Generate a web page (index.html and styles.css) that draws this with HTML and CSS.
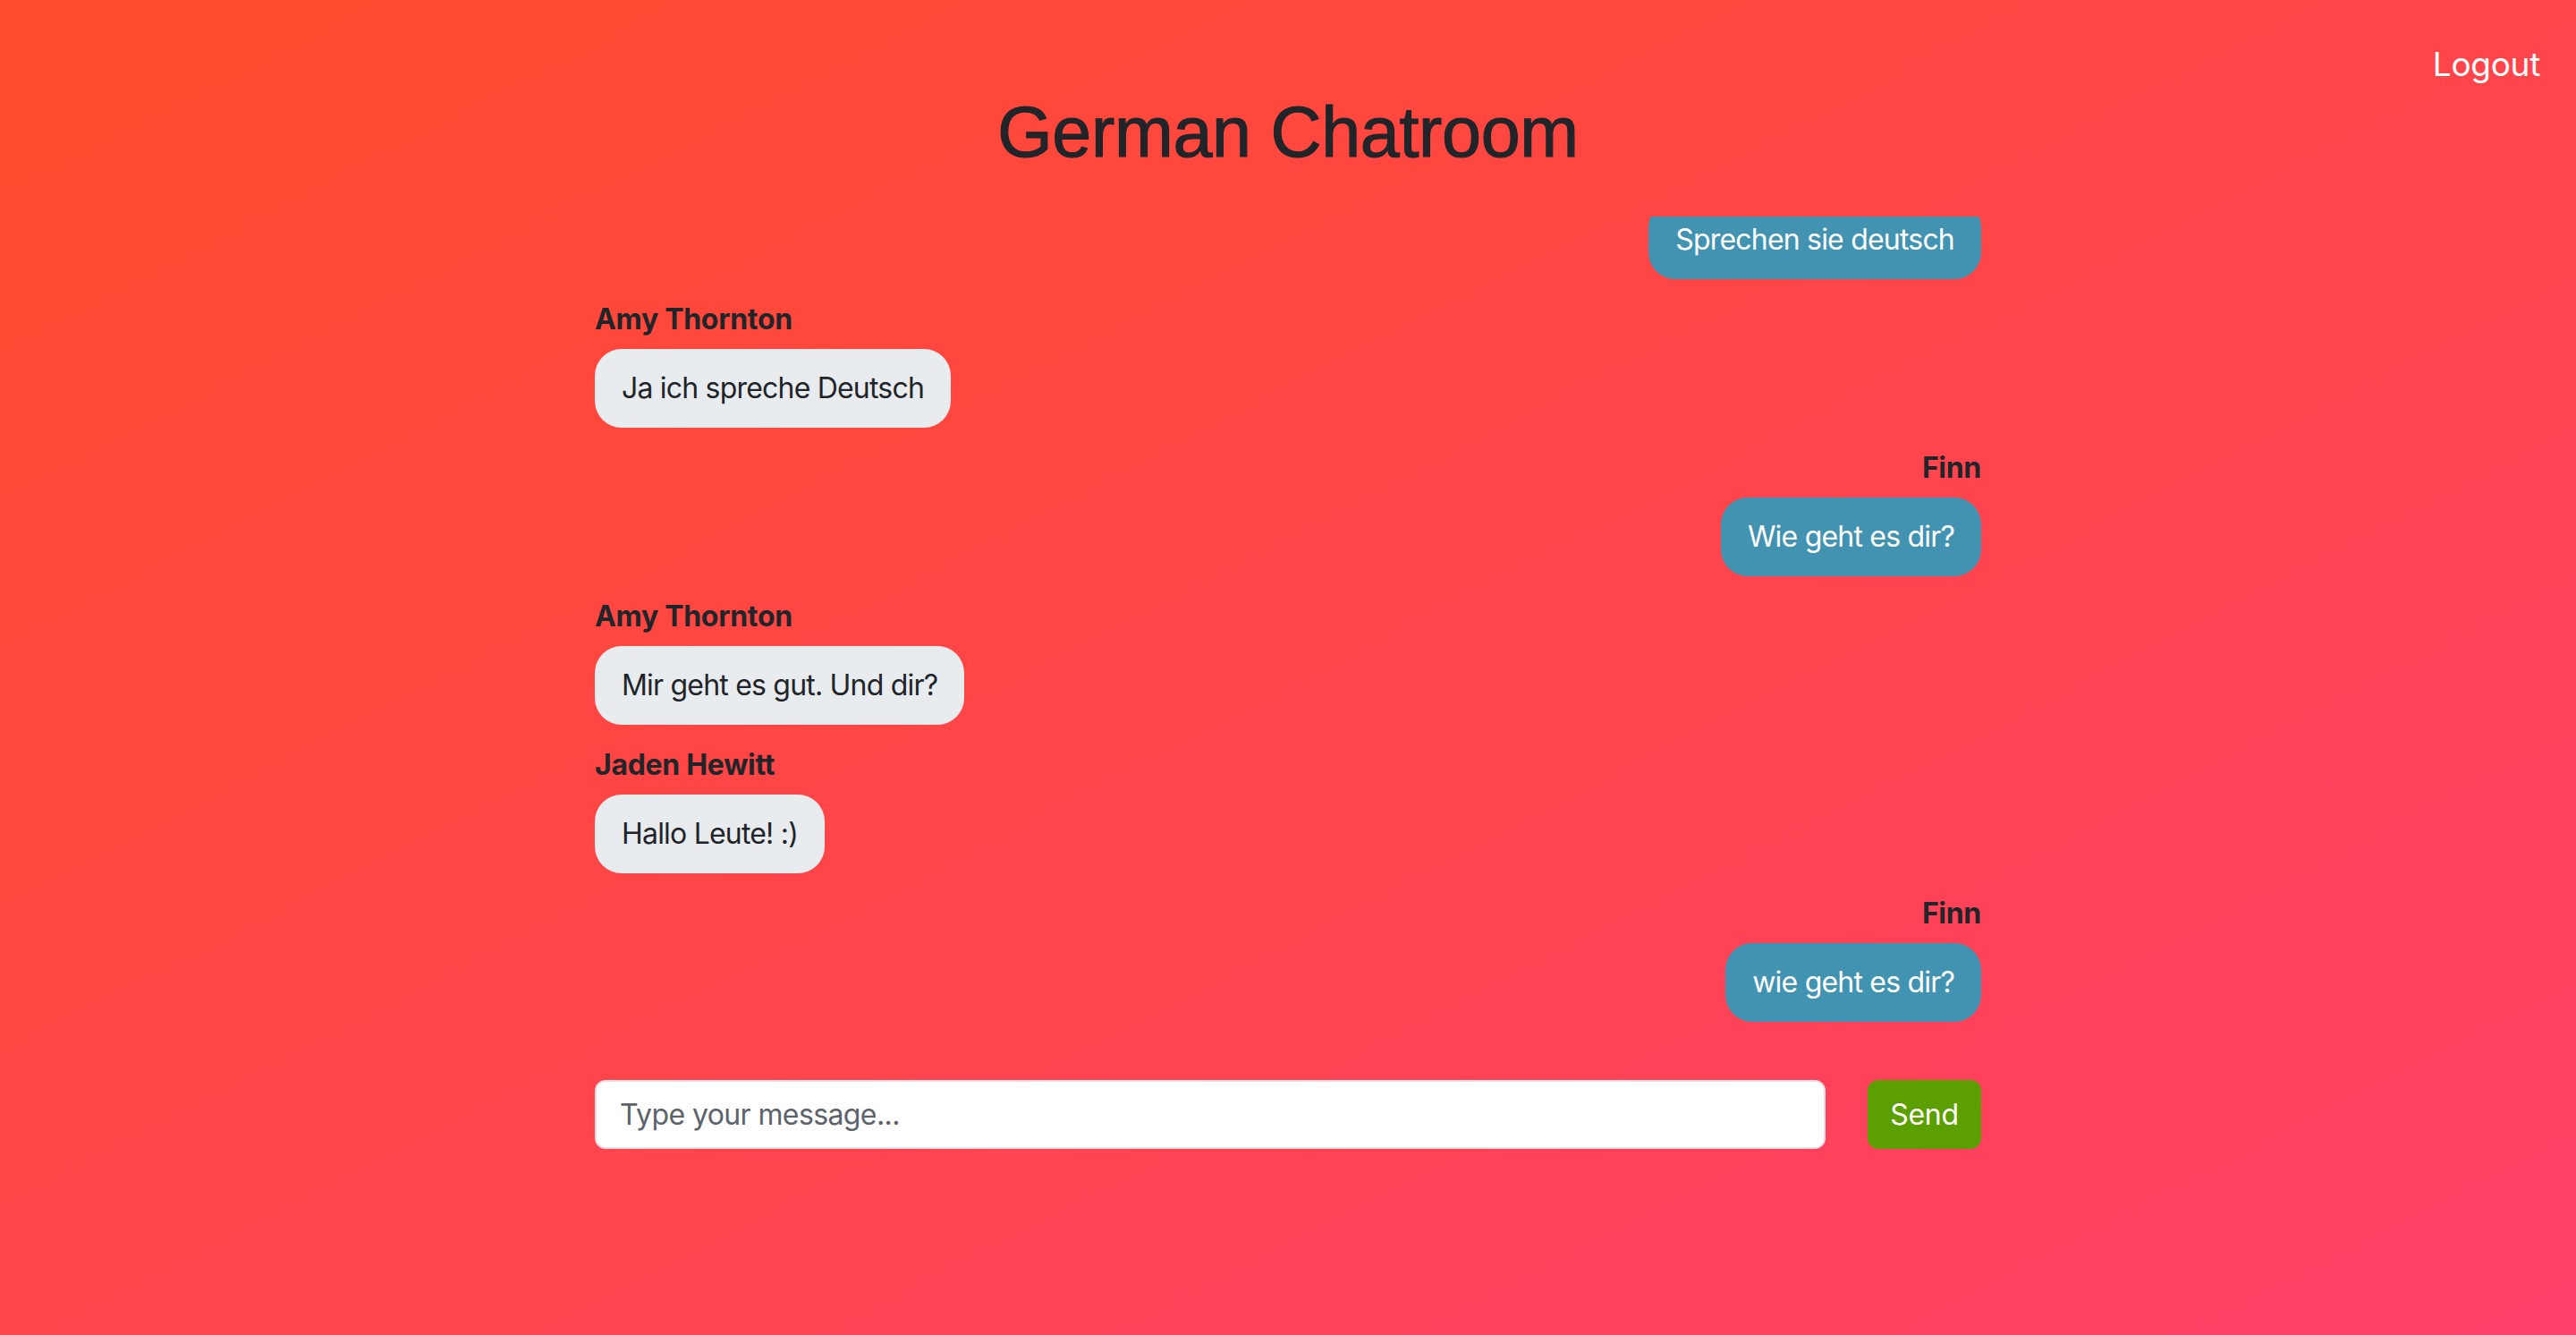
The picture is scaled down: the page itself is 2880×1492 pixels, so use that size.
FILE: index.html
```html
<!DOCTYPE html>
<html lang="de">
<head>
<meta charset="utf-8">
<title>German Chatroom</title>
<link rel="stylesheet" href="styles.css">
</head>
<body>
<div class="page">
  <nav class="topbar">
    <a class="logout" href="#">Logout</a>
  </nav>
  <h1 class="title">German Chatroom</h1>
  <main class="chat">
    <div class="messages">
      <div class="msg mine">
        <div class="author">Finn</div>
        <div class="bubble">Sprechen sie deutsch</div>
      </div>
      <div class="msg">
        <div class="author">Amy Thornton</div>
        <div class="bubble">Ja ich spreche Deutsch</div>
      </div>
      <div class="msg mine">
        <div class="author">Finn</div>
        <div class="bubble">Wie geht es dir?</div>
      </div>
      <div class="msg">
        <div class="author">Amy Thornton</div>
        <div class="bubble">Mir geht es gut. Und dir?</div>
      </div>
      <div class="msg">
        <div class="author">Jaden Hewitt</div>
        <div class="bubble">Hallo Leute! :)</div>
      </div>
      <div class="msg mine">
        <div class="author">Finn</div>
        <div class="bubble">wie geht es dir?</div>
      </div>
    </div>
    <form class="composer">
      <input class="field" type="text" placeholder="Type your message...">
      <button class="send" type="button">Send</button>
    </form>
  </main>
</div>
</body>
</html>
```

FILE: styles.css
```css
html, body {
  margin: 0;
  padding: 0;
}
body {
  min-height: 100vh;
  background: linear-gradient(to bottom right, #ff4b2c, #ff3f68);
  font-family: Inter, "Noto Sans", sans-serif;
  color: #212529;
  font-size: 32px;
  line-height: 1.5;
}
.page {
  min-height: 1492px;
  box-sizing: border-box;
  display: flex;
  flex-direction: column;
}
.topbar {
  display: flex;
  justify-content: flex-end;
  padding: 48px 40px 0 0;
  height: 48px;
}
.logout {
  color: #ffffff;
  text-decoration: none;
  font-size: 37px;
  line-height: 48px;
  letter-spacing: -0.3px;
}
.title {
  margin: 4px 0 0;
  text-align: center;
  font-family: "Liberation Sans", Arial, sans-serif;
  font-weight: 400;
  font-size: 79px;
  line-height: 96px;
  letter-spacing: -0.3px;
  color: #212529;
  -webkit-text-stroke: 1.2px #212529;
}
.chat {
  width: 1550px;
  margin: 46px auto 0;
}
.messages {
  height: 921px;
  overflow: hidden;
  display: flex;
  flex-direction: column;
  justify-content: flex-end;
}
.msg {
  display: flex;
  flex-direction: column;
  align-items: flex-start;
  margin-bottom: 21px;
  flex-shrink: 0;
}
.msg.mine {
  align-items: flex-end;
}
.author {
  font-weight: 700;
  line-height: 48px;
  margin-bottom: 9px;
  letter-spacing: -0.3px;
}
.bubble {
  background: #e9ecef;
  color: #212529;
  padding: 20px 30px;
  line-height: 48px;
  border-radius: 30px;
  letter-spacing: -0.8px;
}
.mine .bubble {
  background: #4193b1;
  color: #ffffff;
}
.composer {
  display: flex;
  gap: 47px;
  margin-top: 44px;
}
.field {
  flex: 1;
  height: 77px;
  box-sizing: border-box;
  border: 2px solid #dee2e6;
  border-radius: 12px;
  padding: 12px 26px;
  font-family: Inter, "Noto Sans", sans-serif;
  font-size: 32px;
  letter-spacing: -0.6px;
  color: #212529;
  background: #ffffff;
  outline: none;
}
.field::placeholder {
  color: #5c636a;
}
.send {
  width: 127px;
  height: 77px;
  border: none;
  border-radius: 12px;
  background: #5b9f00;
  color: #ffffff;
  font-family: Inter, "Noto Sans", sans-serif;
  font-size: 32px;
  letter-spacing: -0.3px;
  padding: 0;
}
```
